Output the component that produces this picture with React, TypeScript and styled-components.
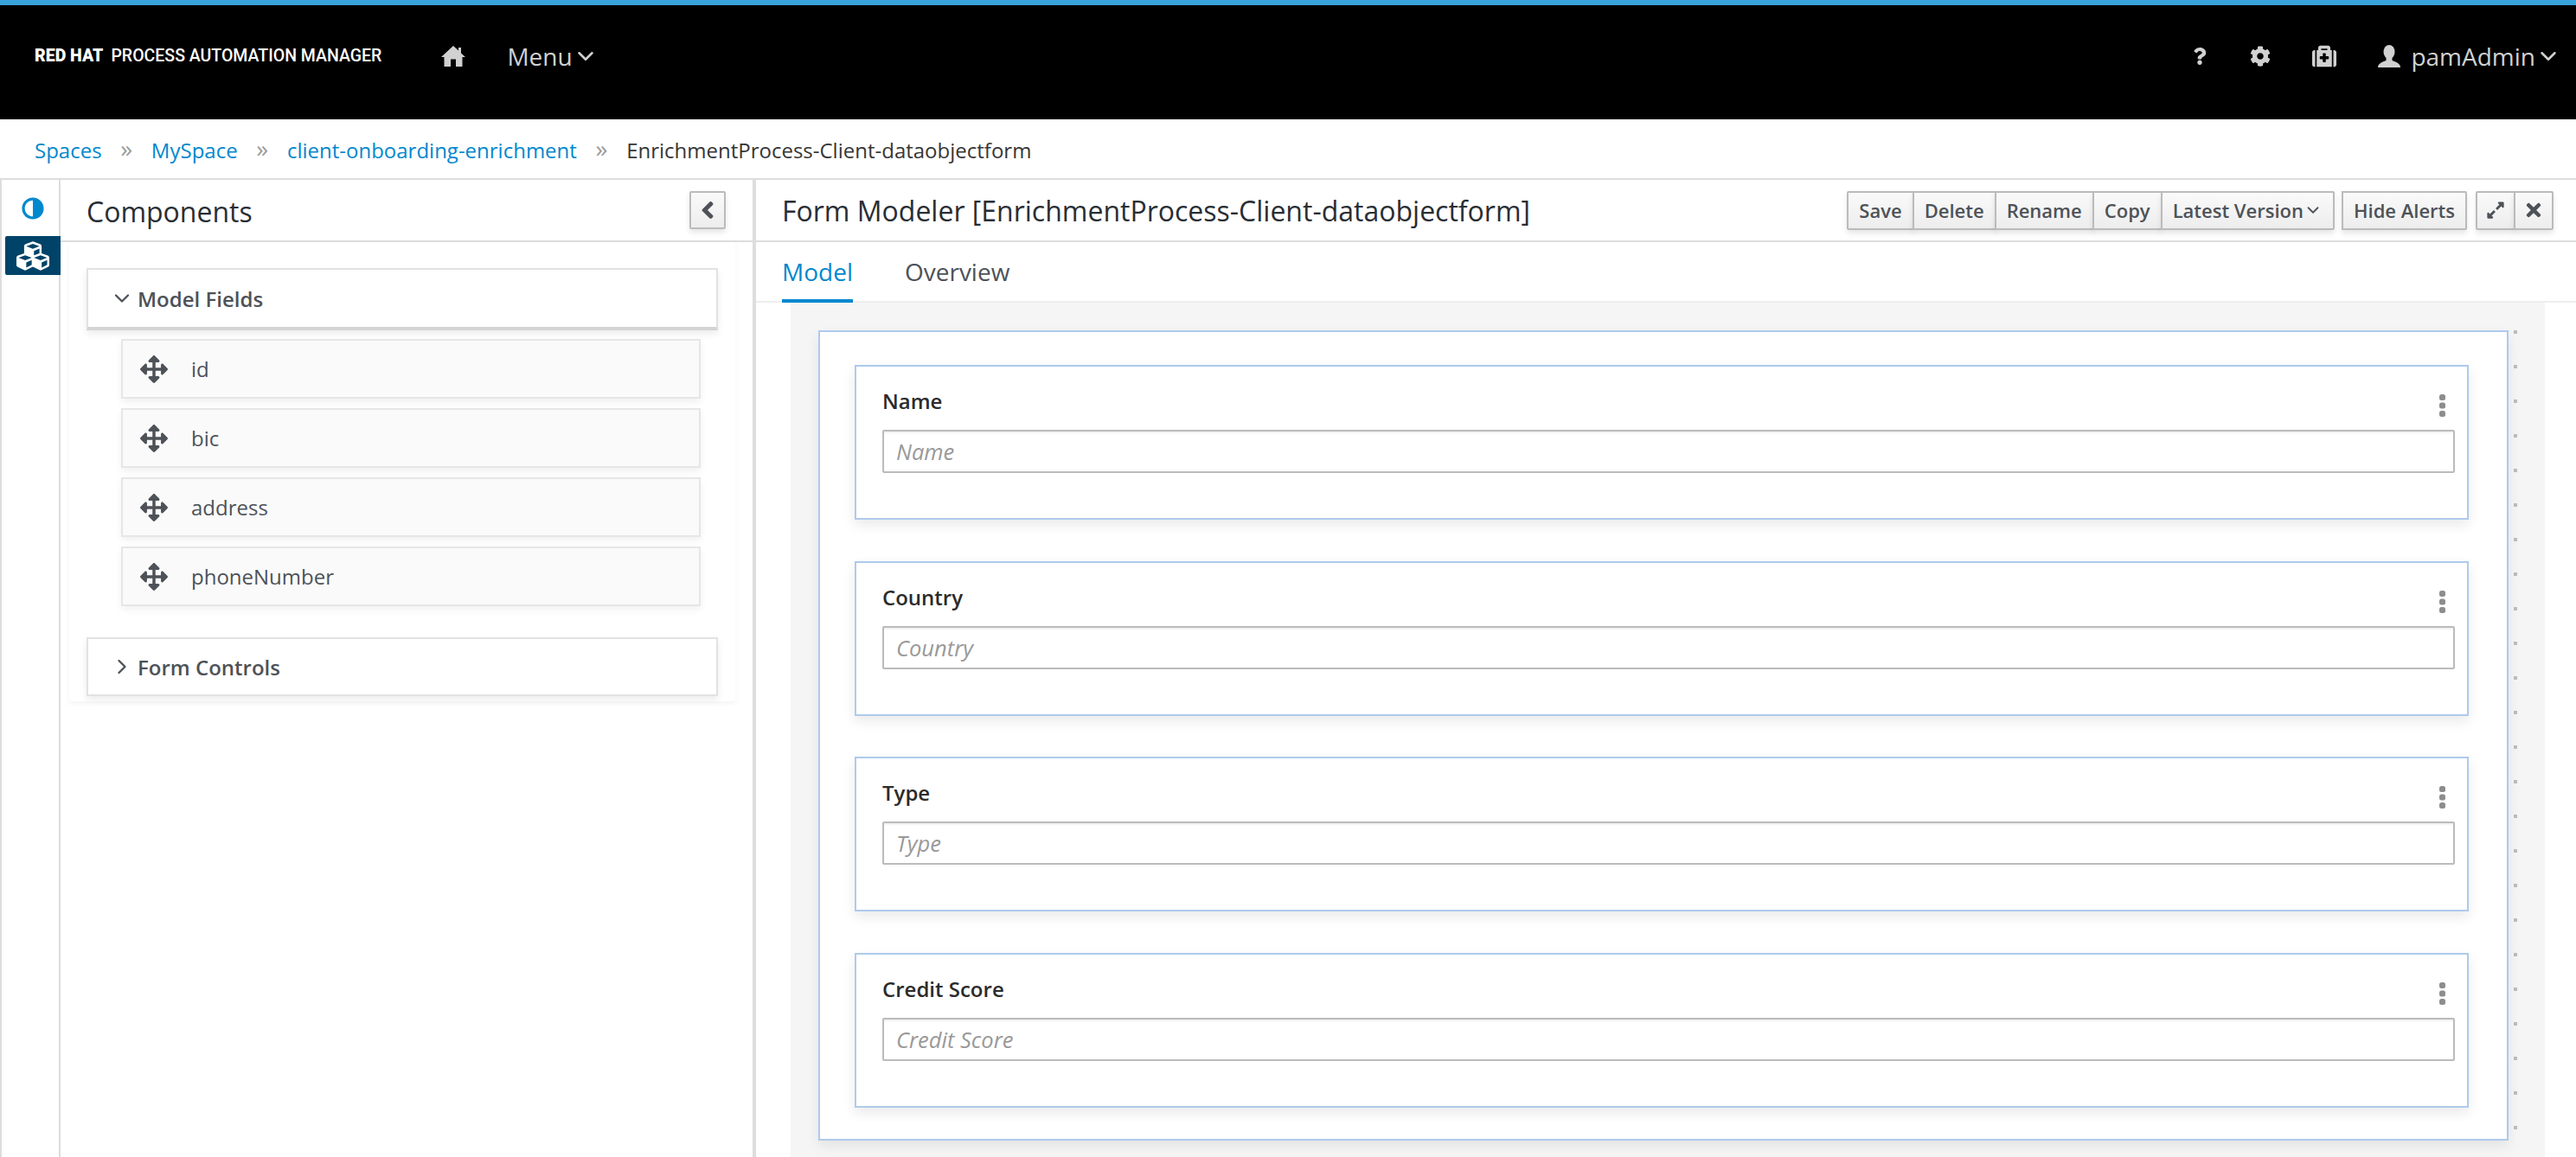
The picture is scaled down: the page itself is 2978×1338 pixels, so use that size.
import React from "react";
import styled, { createGlobalStyle } from "styled-components";
import {
  FaAdjust,
  FaAngleLeft,
  FaArrowsAlt,
  FaCog,
  FaCubes,
  FaExpandAlt,
  FaMedkit,
  FaQuestion,
  FaTimes,
} from "react-icons/fa";
import { FiChevronDown, FiChevronRight } from "react-icons/fi";

const GlobalStyle = createGlobalStyle`
  html, body {
    margin: 0;
    height: 100%;
    overflow: hidden;
    background: #fff;
    font-family: "Open Sans", "Liberation Sans", sans-serif;
    color: #363636;
  }
  * {
    box-sizing: border-box;
  }
`;

const Page = styled.div`
  display: flex;
  flex-direction: column;
  height: 1338px;
`;

const TopBar = styled.header`
  display: flex;
  align-items: center;
  flex-shrink: 0;
  height: 138px;
  padding: 0 17px 14px 40px;
  background: #000;
  border-top: 6px solid #39a5dc;
  color: #d1d1d1;
  font-size: 28px;
`;

const Logo = styled.div`
  display: flex;
  gap: 9px;
  margin-right: 69px;
  color: #fff;
  font-family: Roboto, "Liberation Sans", sans-serif;
  font-size: 19.5px;
  line-height: 24px;
  font-weight: 500;
  white-space: nowrap;
`;

const LogoBrand = styled.span`
  font-weight: 900;
`;

const NavLeft = styled.nav`
  display: flex;
  align-items: center;
  gap: 48px;
`;

const NavRight = styled.nav`
  display: flex;
  align-items: center;
  gap: 48px;
  margin-left: auto;
`;

const NavItem = styled.span<{ $gap?: number }>`
  display: flex;
  align-items: center;
  gap: ${(p) => p.$gap ?? 0}px;
`;

const Crumbs = styled.div`
  display: flex;
  align-items: center;
  flex-shrink: 0;
  gap: 21.7px;
  height: 70px;
  padding: 2px 0 0 40px;
  border-bottom: 2px solid #ddd;
  font-size: 24px;
`;

const CrumbLink = styled.a`
  color: #0088ce;
`;

const CrumbSep = styled.span`
  color: #9c9c9c;
  font-size: 28px;
  line-height: 28px;
  margin-top: -4px;
`;

const Main = styled.div`
  display: flex;
  flex: 1;
  min-height: 0;
`;

const Rail = styled.aside`
  display: flex;
  flex-direction: column;
  flex-shrink: 0;
  width: 70px;
  border-left: 2px solid #ddd;
  border-right: 2px solid #ddd;
`;

const RailItem = styled.div<{ $active?: boolean }>`
  display: flex;
  align-items: center;
  justify-content: center;
  height: ${(p) => (p.$active ? 45 : 65)}px;
  margin: 0 -2px 0 4px;
  background: ${(p) => (p.$active ? "#004368" : "transparent")};
  border-radius: ${(p) => (p.$active ? "2px 0 0 2px" : "0")};
  color: ${(p) => (p.$active ? "#fff" : "#0088ce")};
  font-size: ${(p) => (p.$active ? 38 : 26)}px;
`;

const AdjustIcon = styled(FaAdjust)`
  transform: scaleX(-1);
`;

const SidePanel = styled.section`
  flex-shrink: 0;
  width: 804px;
  border-right: 4px solid #ddd;
`;

const PanelHead = styled.div`
  display: flex;
  align-items: center;
  justify-content: space-between;
  height: 72px;
  padding: 0 31px 0 30px;
  border-bottom: 2px solid #ddd;
`;

const PanelTitle = styled.h2`
  margin: 2px 0 0;
  font-size: 32px;
  font-weight: 400;
  color: #292e34;
`;

const IconButton = styled.button`
  display: flex;
  align-items: center;
  justify-content: center;
  width: 42px;
  height: 44px;
  padding: 0;
  border: 2px solid #bbb;
  border-radius: 2px;
  background: linear-gradient(#fafafa, #ededed);
  box-shadow: 0 4px 6px rgba(3, 3, 3, 0.1);
  color: #4d5258;
  font-size: 32px;
`;

const Accordion = styled.div`
  margin: 0 20px 0 10px;
  padding: 30px 20px 6px;
  box-shadow: 0 2px 6px rgba(3, 3, 3, 0.05);
`;

const FieldGroup = styled.div<{ $open?: boolean }>`
  display: flex;
  align-items: center;
  gap: 4px;
  height: ${(p) => (p.$open ? 72 : 68)}px;
  padding-left: 25px;
  border: 2px solid #e2e2e2;
  border-bottom: ${(p) => (p.$open ? "4px solid #d4d4d4" : "2px solid #e2e2e2")};
  background: #fff;
  box-shadow: 0 4px 8px rgba(3, 3, 3, 0.08);
  color: #4d5258;
  font-size: 24px;
  font-weight: 600;
`;

const FieldList = styled.ul`
  display: flex;
  flex-direction: column;
  gap: 11px;
  margin: 10px 20px 36px 40px;
  padding: 0;
  list-style: none;
`;

const FieldItem = styled.li`
  display: flex;
  align-items: center;
  gap: 27px;
  height: 69px;
  padding-left: 20px;
  border: 2px solid #e6e6e6;
  background: #fafafa;
  box-shadow: 0 4px 8px rgba(3, 3, 3, 0.06);
  color: #4d5258;
  font-size: 24px;
`;

const Content = styled.section`
  display: flex;
  flex-direction: column;
  flex: 1;
  min-width: 0;
`;

const ContentHead = styled.div`
  display: flex;
  align-items: center;
  justify-content: space-between;
  flex-shrink: 0;
  height: 72px;
  padding: 0 26px 0 30px;
  border-bottom: 2px solid #ddd;
`;

const ContentTitle = styled.h1`
  margin: 0;
  font-size: 32px;
  font-weight: 400;
  color: #292e34;
  white-space: nowrap;
`;

const Toolbar = styled.div`
  display: flex;
  align-items: center;
  gap: 8px;
`;

const BtnGroup = styled.div<{ $tight?: boolean }>`
  display: flex;
  margin-left: ${(p) => (p.$tight ? 2 : 0)}px;
`;

const Btn = styled.button<{ $width?: number }>`
  display: flex;
  align-items: center;
  justify-content: center;
  height: 45px;
  width: ${(p) => (p.$width ? `${p.$width}px` : "auto")};
  padding: 0 ${(p) => (p.$width ? 0 : 12)}px;
  margin-left: -2px;
  border: 2px solid #bbb;
  background: linear-gradient(#fafafa, #ededed);
  box-shadow: 0 4px 6px rgba(3, 3, 3, 0.1);
  color: #4d5258;
  font-family: inherit;
  font-size: 22px;
  font-weight: 600;
  &:first-child {
    margin-left: 0;
    border-radius: 2px 0 0 2px;
  }
  &:last-child {
    border-radius: 0 2px 2px 0;
  }
`;

const Tabs = styled.div`
  display: flex;
  flex-shrink: 0;
  gap: 60px;
  height: 70px;
  padding-left: 30px;
  border-bottom: 2px solid #eee;
`;

const Tab = styled.a<{ $active?: boolean }>`
  height: 70px;
  padding-top: 14px;
  border-bottom: 4px solid ${(p) => (p.$active ? "#0088ce" : "transparent")};
  color: ${(p) => (p.$active ? "#0088ce" : "#4d5258")};
  font-size: 28px;
  line-height: 40px;
`;

const Canvas = styled.div`
  display: flex;
  align-items: flex-start;
  gap: 6px;
  flex: 1;
  min-height: 0;
  margin: 0 36px 0 40px;
  padding: 32px 0 0 32px;
  background: #f5f5f5;
`;

const FormFrame = styled.div`
  display: flex;
  flex-direction: column;
  gap: 47.67px;
  flex-shrink: 0;
  width: 1954px;
  height: 937px;
  padding: 38px 44px 0 40px;
  border: 2px solid #aecaec;
  background: #fff;
  box-shadow: 0 6px 14px rgba(3, 3, 3, 0.08);
`;

const DropDots = styled.div`
  display: flex;
  flex-direction: column;
  gap: 36px;
`;

const DropDot = styled.i`
  display: block;
  width: 4px;
  height: 4px;
  background: #bbb;
`;

const FieldCard = styled.div`
  position: relative;
  flex-shrink: 0;
  height: 179px;
  padding: 23px 14px 0 30px;
  border: 2px solid #aecaec;
  background: #fff;
  box-shadow: 0 6px 14px rgba(3, 3, 3, 0.09);
`;

const FieldLabel = styled.label`
  display: block;
  margin-bottom: 16px;
  font-size: 24px;
  line-height: 34px;
  font-weight: 600;
  color: #2b2b2b;
`;

const FieldInput = styled.input`
  display: block;
  width: 100%;
  height: 50px;
  padding: 0 14px;
  border: 2px solid #bbb;
  border-radius: 2px;
  box-shadow: inset 0 2px 2px rgba(3, 3, 3, 0.06);
  font-family: inherit;
  font-size: 25.5px;
  outline: none;
  &::placeholder {
    color: #999;
    font-style: italic;
    opacity: 1;
  }
`;

const Kebab = styled.svg`
  position: absolute;
  top: 32px;
  right: 25px;
  width: 7px;
  height: 26px;
`;

const HomeIcon = () => (
  <svg width="28" height="24" viewBox="0 0 28 24" fill="#d1d1d1">
    <path d="M14 0 L20 5.5 V2 H23 V8.5 L28 13 H24.5 V24 H17 V15.5 H11 V24 H3.5 V13 H0 Z" />
  </svg>
);

const UserIcon = () => (
  <svg width="26" height="26" viewBox="0 0 26 26" fill="#d1d1d1">
    <ellipse cx="13" cy="8" rx="6.5" ry="8" />
    <path d="M0 26 C0 22 4 20 9.5 18 V13 H16.5 V18 C22 20 26 22 26 26 Z" />
  </svg>
);

const crumbs = ["Spaces", "MySpace", "client-onboarding-enrichment"];
const modelFields = ["id", "bic", "address", "phoneNumber"];
const formFields = ["Name", "Country", "Type", "Credit Score"];
const actions = ["Save", "Delete", "Rename", "Copy"];

export default function App() {
  return (
    <Page>
      <GlobalStyle />
      <TopBar>
        <Logo>
          <LogoBrand>RED HAT</LogoBrand>
          <span>PROCESS AUTOMATION MANAGER</span>
        </Logo>
        <NavLeft>
          <HomeIcon />
          <NavItem>
            Menu <FiChevronDown size={30} />
          </NavItem>
        </NavLeft>
        <NavRight>
          <FaQuestion size={20} />
          <FaCog size={24} />
          <FaMedkit size={28} />
          <NavItem $gap={12}>
            <UserIcon />
            <NavItem>
              pamAdmin <FiChevronDown size={30} />
            </NavItem>
          </NavItem>
        </NavRight>
      </TopBar>

      <Crumbs>
        {crumbs.map((crumb) => (
          <React.Fragment key={crumb}>
            <CrumbLink>{crumb}</CrumbLink>
            <CrumbSep>»</CrumbSep>
          </React.Fragment>
        ))}
        <span>EnrichmentProcess-Client-dataobjectform</span>
      </Crumbs>

      <Main>
        <Rail>
          <RailItem>
            <AdjustIcon />
          </RailItem>
          <RailItem $active>
            <FaCubes />
          </RailItem>
        </Rail>

        <SidePanel>
          <PanelHead>
            <PanelTitle>Components</PanelTitle>
            <IconButton>
              <FaAngleLeft />
            </IconButton>
          </PanelHead>
          <Accordion>
            <FieldGroup $open>
              <FiChevronDown size={28} />
              Model Fields
            </FieldGroup>
            <FieldList>
              {modelFields.map((field) => (
                <FieldItem key={field}>
                  <FaArrowsAlt size={32} />
                  {field}
                </FieldItem>
              ))}
            </FieldList>
            <FieldGroup>
              <FiChevronRight size={28} />
              Form Controls
            </FieldGroup>
          </Accordion>
        </SidePanel>

        <Content>
          <ContentHead>
            <ContentTitle>Form Modeler [EnrichmentProcess-Client-dataobjectform]</ContentTitle>
            <Toolbar>
              <BtnGroup>
                {actions.map((action) => (
                  <Btn key={action}>{action}</Btn>
                ))}
                <Btn>
                  Latest Version <FiChevronDown size={22} />
                </Btn>
              </BtnGroup>
              <BtnGroup>
                <Btn>Hide Alerts</Btn>
              </BtnGroup>
              <BtnGroup $tight>
                <Btn $width={46}>
                  <FaExpandAlt size={22} />
                </Btn>
                <Btn $width={46}>
                  <FaTimes size={24} />
                </Btn>
              </BtnGroup>
            </Toolbar>
          </ContentHead>

          <Tabs>
            <Tab $active>Model</Tab>
            <Tab>Overview</Tab>
          </Tabs>

          <Canvas>
            <FormFrame>
              {formFields.map((field) => (
                <FieldCard key={field}>
                  <FieldLabel>{field}</FieldLabel>
                  <FieldInput placeholder={field} readOnly />
                  <Kebab viewBox="0 0 7 26" fill="#8b8d8f">
                    <rect x="0" y="0" width="7" height="7" rx="2.5" />
                    <rect x="0" y="9.5" width="7" height="7" rx="2.5" />
                    <rect x="0" y="19" width="7" height="7" rx="2.5" />
                  </Kebab>
                </FieldCard>
              ))}
            </FormFrame>
            <DropDots>
              {Array.from({ length: 24 }, (_, i) => (
                <DropDot key={i} />
              ))}
            </DropDots>
          </Canvas>
        </Content>
      </Main>
    </Page>
  );
}
